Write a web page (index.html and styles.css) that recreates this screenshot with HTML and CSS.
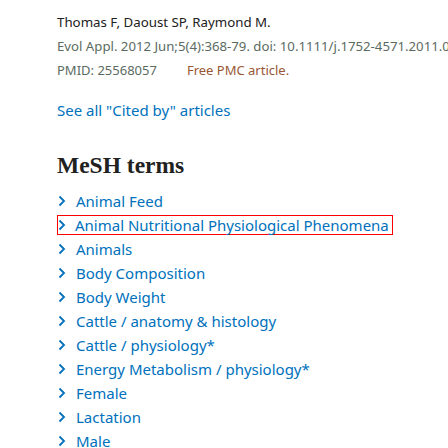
FILE: index.html
```html
<!DOCTYPE html>
<html>
<head>
<meta charset="utf-8">
<link rel="stylesheet" href="styles.css">
</head>
<body>
<div class="page">
  <div class="citation">
    <div class="authors">Thomas F, Daoust SP, Raymond M.</div>
    <div class="journal">Evol Appl. 2012 Jun;5(4):368-79. doi: 10.1111/j.1752-4571.2011.00228.x. eCollection 2012 Jun.</div>
    <div class="ids"><span class="pmid">PMID: 25568057</span><span class="free">Free PMC article.</span></div>
  </div>
  <a class="see-all" href="#">See all "Cited by" articles</a>
  <h2 class="heading">MeSH terms</h2>
  <ul class="mesh">
    <li><span class="chev"><svg width="8" height="12" viewBox="0 0 8 12"><path d="M1.5 1.5 L6 6 L1.5 10.5" fill="none" stroke="#0071bc" stroke-width="1.8"/></svg></span><a href="#">Animal Feed</a></li>
    <li class="selected"><span class="chev"><svg width="8" height="12" viewBox="0 0 8 12"><path d="M1.5 1.5 L6 6 L1.5 10.5" fill="none" stroke="#0071bc" stroke-width="1.8"/></svg></span><a href="#">Animal Nutritional Physiological Phenomena</a></li>
    <li><span class="chev"><svg width="8" height="12" viewBox="0 0 8 12"><path d="M1.5 1.5 L6 6 L1.5 10.5" fill="none" stroke="#0071bc" stroke-width="1.8"/></svg></span><a href="#">Animals</a></li>
    <li><span class="chev"><svg width="8" height="12" viewBox="0 0 8 12"><path d="M1.5 1.5 L6 6 L1.5 10.5" fill="none" stroke="#0071bc" stroke-width="1.8"/></svg></span><a href="#">Body Composition</a></li>
    <li><span class="chev"><svg width="8" height="12" viewBox="0 0 8 12"><path d="M1.5 1.5 L6 6 L1.5 10.5" fill="none" stroke="#0071bc" stroke-width="1.8"/></svg></span><a href="#">Body Weight</a></li>
    <li><span class="chev"><svg width="8" height="12" viewBox="0 0 8 12"><path d="M1.5 1.5 L6 6 L1.5 10.5" fill="none" stroke="#0071bc" stroke-width="1.8"/></svg></span><a href="#">Cattle / anatomy &amp; histology</a></li>
    <li><span class="chev"><svg width="8" height="12" viewBox="0 0 8 12"><path d="M1.5 1.5 L6 6 L1.5 10.5" fill="none" stroke="#0071bc" stroke-width="1.8"/></svg></span><a href="#">Cattle / physiology*</a></li>
    <li><span class="chev"><svg width="8" height="12" viewBox="0 0 8 12"><path d="M1.5 1.5 L6 6 L1.5 10.5" fill="none" stroke="#0071bc" stroke-width="1.8"/></svg></span><a href="#">Energy Metabolism / physiology*</a></li>
    <li><span class="chev"><svg width="8" height="12" viewBox="0 0 8 12"><path d="M1.5 1.5 L6 6 L1.5 10.5" fill="none" stroke="#0071bc" stroke-width="1.8"/></svg></span><a href="#">Female</a></li>
    <li><span class="chev"><svg width="8" height="12" viewBox="0 0 8 12"><path d="M1.5 1.5 L6 6 L1.5 10.5" fill="none" stroke="#0071bc" stroke-width="1.8"/></svg></span><a href="#">Lactation</a></li>
    <li><span class="chev"><svg width="8" height="12" viewBox="0 0 8 12"><path d="M1.5 1.5 L6 6 L1.5 10.5" fill="none" stroke="#0071bc" stroke-width="1.8"/></svg></span><a href="#">Male</a></li>
  </ul>
</div>
</body>
</html>
```
FILE: styles.css
```css
html, body {
  margin: 0;
  padding: 0;
  background: #fff;
  overflow: hidden;
}
.page {
  padding: 10px 0 0 57px;
  font-family: "Noto Sans", "Open Sans", sans-serif;
  white-space: nowrap;
}
.citation {
  font-size: 13px;
  line-height: 24px;
}
.authors {
  color: #212121;
  font-size: 13.3px;
}
.journal {
  font-size: 13.2px;
}
.journal, .pmid {
  color: #5b6b5f;
}
.free {
  color: #985735;
  margin-left: 30px;
}
.see-all {
  display: block;
  margin-top: 16px;
  font-size: 15px;
  line-height: 24px;
  color: #0071bc;
  text-decoration: none;
}
.heading {
  margin: 29px 0 10px;
  font-family: "Liberation Serif", serif;
  font-size: 23.5px;
  line-height: 28px;
  font-weight: bold;
  color: #212121;
}
.mesh {
  list-style: none;
  margin: 0;
  padding: 0;
}
.mesh li {
  display: flex;
  align-items: center;
  height: 24px;
  font-size: 15px;
}
.mesh li.selected {
  height: 20px;
  margin: 2px 0;
  width: 336px;
  border: 1px solid #f00;
  box-sizing: border-box;
}
.chev {
  display: flex;
  width: 18px;
  padding-left: 1px;
}
.selected .chev {
  width: 17px;
  padding-left: 0;
}
.mesh a {
  color: #0071bc;
  text-decoration: none;
}
```
